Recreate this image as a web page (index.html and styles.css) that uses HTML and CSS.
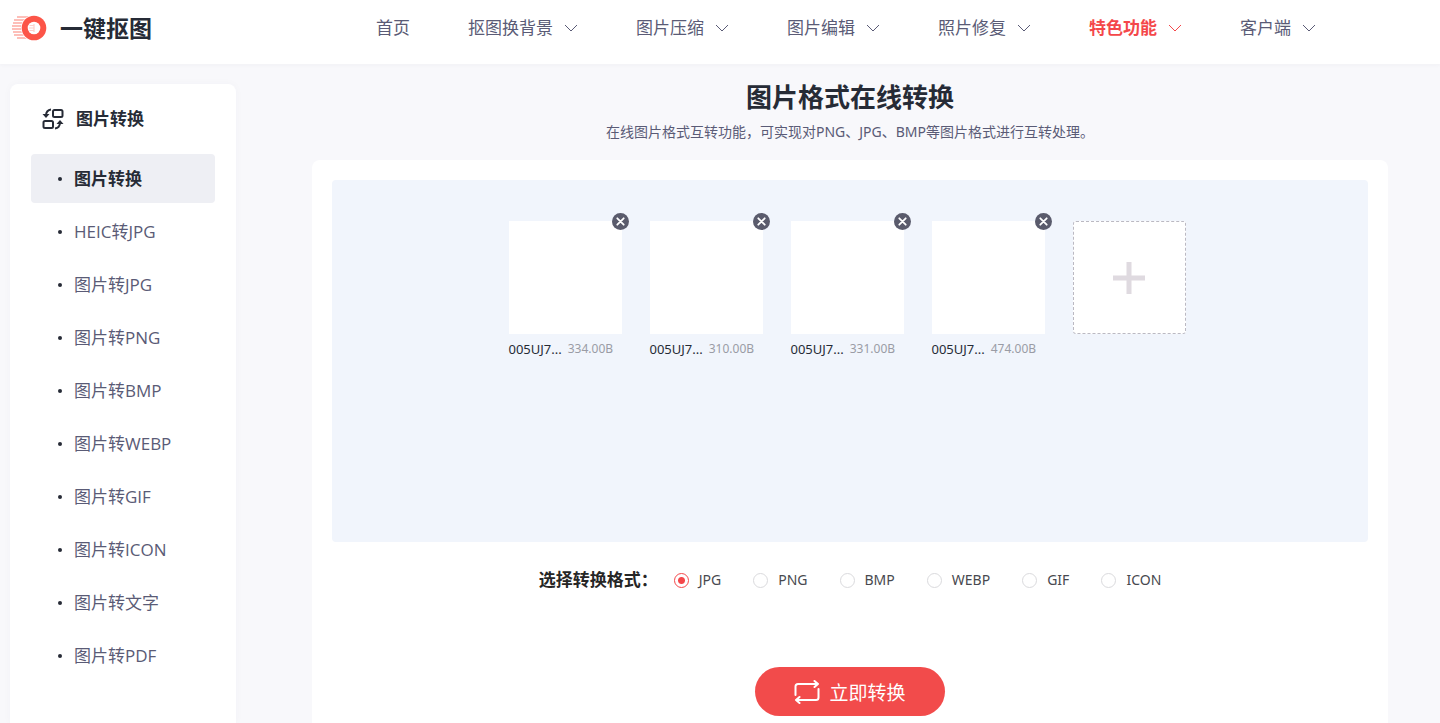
FILE: index.html
```html
<!DOCTYPE html>
<html lang="zh-CN">
<head>
    <meta charset="UTF-8">
    <meta name="viewport" content="width=device-width, initial-scale=1.0">
    <title>图片格式在线转换 - 一键抠图</title>
    <link rel="stylesheet" href="styles.css">
</head>
<body>
    <!-- Shared icon shapes -->
    <svg class="sprite" aria-hidden="true">
        <symbol id="chevron" viewBox="0 0 14 8">
            <path d="M1 1l6 6 6-6" fill="none" stroke="currentColor" stroke-width="1"/>
        </symbol>
        <symbol id="close" viewBox="0 0 17 17">
            <circle cx="8.5" cy="8.5" r="8.5" fill="#5a5b6c"/>
            <path d="M5.3 5.3l6.4 6.4M11.7 5.3l-6.4 6.4" stroke="#fff" stroke-width="1.8" stroke-linecap="round"/>
        </symbol>
    </svg>

    <header class="header">
        <a class="logo" href="#">
            <svg class="logo-icon" width="36" height="26" viewBox="0 0 36 26" aria-hidden="true">
                <path d="M5 2h13M2 5h12M1 8h11M0 11h10M0 14h10M1 17h11M2 20h12M5 23h13" stroke="#fdaaa2" stroke-width="1.6"/>
                <circle cx="22" cy="13" r="13" fill="#fff"/>
                <circle cx="22" cy="13" r="12.3" fill="#fc5548"/>
                <circle cx="22" cy="13" r="6.3" fill="#fff"/>
                <path d="M17.500 10.500h4M17 13h5M17.500 15.500h4M22 9v8" stroke="#fdd0cc" stroke-width="1.200"/>
            </svg>
            <span>一键抠图</span>
        </a>
        <nav class="nav">
            <a href="#">首页</a>
            <a href="#">抠图换背景<svg><use href="#chevron"/></svg></a>
            <a href="#">图片压缩<svg><use href="#chevron"/></svg></a>
            <a href="#">图片编辑<svg><use href="#chevron"/></svg></a>
            <a href="#">照片修复<svg><use href="#chevron"/></svg></a>
            <a class="active" href="#">特色功能<svg><use href="#chevron"/></svg></a>
            <a href="#">客户端<svg><use href="#chevron"/></svg></a>
        </nav>
    </header>

    <div class="layout">
        <aside class="sidebar">
            <h2>
                <svg width="22" height="22" viewBox="0 0 22 22" fill="none" stroke="#262b36" stroke-width="2" aria-hidden="true">
                    <rect x="11" y="2" width="9.500" height="7" rx="1.500"/>
                    <rect x="1.500" y="13" width="9.500" height="7" rx="1.500"/>
                    <path d="M9 1.500C5.800 2 4.200 4 4 7"/>
                    <path d="M.5 6h7L4 10z" fill="#262b36" stroke="none"/>
                    <path d="M13 20.500c3.200-.5 4.800-2.500 5-5.500"/>
                    <path d="M14.500 16h7L18 12z" fill="#262b36" stroke="none"/>
                </svg>
                图片转换
            </h2>
            <ul class="menu">
                <li><a class="active" href="#">图片转换</a></li>
                <li><a href="#">HEIC转JPG</a></li>
                <li><a href="#">图片转JPG</a></li>
                <li><a href="#">图片转PNG</a></li>
                <li><a href="#">图片转BMP</a></li>
                <li><a href="#">图片转WEBP</a></li>
                <li><a href="#">图片转GIF</a></li>
                <li><a href="#">图片转ICON</a></li>
                <li><a href="#">图片转文字</a></li>
                <li><a href="#">图片转PDF</a></li>
            </ul>
        </aside>

        <main class="main">
            <h1>图片格式在线转换</h1>
            <p class="intro">在线图片格式互转功能，可实现对PNG、JPG、BMP等图片格式进行互转处理。</p>

            <form class="panel">
                <!-- Uploaded files -->
                <div class="files">
                    <div class="file">
                        <div class="thumb"></div>
                        <button class="remove" type="button" aria-label="删除"><svg><use href="#close"/></svg></button>
                        <p><span class="name">005UJ7...</span><span class="size">334.00B</span></p>
                    </div>
                    <div class="file">
                        <div class="thumb"></div>
                        <button class="remove" type="button" aria-label="删除"><svg><use href="#close"/></svg></button>
                        <p><span class="name">005UJ7...</span><span class="size">310.00B</span></p>
                    </div>
                    <div class="file">
                        <div class="thumb"></div>
                        <button class="remove" type="button" aria-label="删除"><svg><use href="#close"/></svg></button>
                        <p><span class="name">005UJ7...</span><span class="size">331.00B</span></p>
                    </div>
                    <div class="file">
                        <div class="thumb"></div>
                        <button class="remove" type="button" aria-label="删除"><svg><use href="#close"/></svg></button>
                        <p><span class="name">005UJ7...</span><span class="size">474.00B</span></p>
                    </div>
                    <button class="add" type="button" aria-label="添加图片">
                        <svg width="32" height="32" viewBox="0 0 32 32"><path d="M16 0v32M0 16h32" stroke="#dfdae0" stroke-width="5"/></svg>
                    </button>
                </div>

                <!-- Output format -->
                <div class="formats" role="radiogroup" aria-labelledby="format-title">
                    <strong id="format-title">选择转换格式：</strong>
                    <label><input type="radio" name="format" value="jpg" checked>JPG</label>
                    <label><input type="radio" name="format" value="png">PNG</label>
                    <label><input type="radio" name="format" value="bmp">BMP</label>
                    <label><input type="radio" name="format" value="webp">WEBP</label>
                    <label><input type="radio" name="format" value="gif">GIF</label>
                    <label><input type="radio" name="format" value="icon">ICON</label>
                </div>

                <button class="convert" type="button">
                    <svg width="26" height="24" viewBox="0 0 26 24" fill="none" stroke="#fff" stroke-width="2" stroke-linecap="round" stroke-linejoin="round" aria-hidden="true">
                        <path d="M1.500 15V6.500a2.500 2.500 0 0 1 2.500-2.500h20M20.500 1l3.500 3-3.500 3"/>
                        <path d="M24.500 9v8.500a2.500 2.500 0 0 1-2.500 2.500H2M5.500 17L2 20l3.500 3"/>
                    </svg>
                    立即转换
                </button>
            </form>
        </main>
    </div>
</body>
</html>
```
FILE: styles.css
```css
* {
    box-sizing: border-box;
}
body {
    margin: 0;
    min-height: 100vh;
    display: flex;
    flex-direction: column;
    font-family: "Open Sans", "Noto Sans CJK SC", sans-serif;
    background-color: #f8f8fb;
    color: #262b36;
}
a {
    color: inherit;
    text-decoration: none;
}
button {
    padding: 0;
    border: none;
    font-family: inherit;
    cursor: pointer;
}
.sprite {
    display: none;
}

/* Header */
.header {
    display: flex;
    align-items: center;
    height: 64px;
    padding-bottom: 8px;
    background: white;
    box-shadow: 0 1px 4px rgba(40, 40, 80, 0.04);
}
.logo {
    display: flex;
    align-items: center;
    gap: 12px;
    width: 252px;
    padding-left: 12px;
    font-size: 23px;
    font-weight: bold;
    line-height: 32px;
}
.nav {
    flex: 1;
    display: flex;
    justify-content: center;
    gap: 58px;
    font-size: 17px;
    line-height: 24px;
    color: #5a5b76;
    white-space: nowrap;
}
.nav a {
    display: flex;
    align-items: center;
    gap: 11px;
}
.nav svg {
    width: 14px;
    height: 8px;
}
.nav .active {
    color: #f4474a;
    font-weight: bold;
}

/* Sidebar */
.layout {
    flex: 1;
    display: flex;
}
.sidebar {
    width: 226px;
    margin: 20px 24px 0 10px;
    padding: 23px 21px 0;
    background: white;
    border-radius: 8px 8px 0 0;
    box-shadow: 0 0 8px rgba(40, 40, 80, 0.03);
}
.sidebar h2 {
    display: flex;
    align-items: center;
    gap: 12px;
    margin: 0 0 23px;
    padding-left: 11px;
    font-size: 17px;
    line-height: 24px;
}
.menu {
    display: grid;
    gap: 4px;
    margin: 0;
    padding: 0;
    list-style: none;
}
.menu a {
    display: flex;
    align-items: center;
    gap: 12px;
    height: 49px;
    padding-left: 27px;
    border-radius: 4px;
    font-size: 17px;
    line-height: 24px;
    color: #5a5b76;
}
.menu a::before {
    content: "";
    width: 4px;
    height: 4px;
    border-radius: 50%;
    background: #262b36;
}
.menu .active {
    background: #eeeff4;
    color: #262b36;
    font-weight: bold;
}

/* Converter */
.main {
    flex: 1;
    display: flex;
    flex-direction: column;
    align-items: center;
    padding: 15px 52px 0;
}
.main h1 {
    margin: 0;
    font-size: 26px;
    line-height: 36px;
}
.intro {
    margin: 6px 0 18px;
    font-family: "Noto Sans", "Noto Sans CJK SC", sans-serif;
    font-size: 14px;
    line-height: 21px;
    color: #5a5b76;
}
.panel {
    flex: 1;
    display: flex;
    flex-direction: column;
    align-items: center;
    width: 100%;
    padding: 20px 20px 6px;
    background: white;
    border-radius: 8px 8px 0 0;
}
.files {
    display: flex;
    justify-content: center;
    align-items: flex-start;
    gap: 28px;
    width: 100%;
    min-height: 362px;
    padding: 41px 36px 41px 30px;
    background: #f1f5fc;
    border-radius: 4px;
}
.file {
    position: relative;
    width: 113px;
}
.thumb,
.add {
    width: 113px;
    height: 113px;
    background: white;
}
.remove {
    position: absolute;
    top: -8px;
    right: -7px;
    width: 17px;
    height: 17px;
    background: none;
}
.remove svg {
    display: block;
    width: 17px;
    height: 17px;
}
.file p {
    display: flex;
    gap: 6px;
    margin: 6px 0 0;
    font-family: "Noto Sans", sans-serif;
    font-size: 12px;
    line-height: 18px;
    white-space: nowrap;
}
.name {
    font-size: 13px;
}
.size {
    color: #9a9ca5;
}
.add {
    display: flex;
    justify-content: center;
    align-items: center;
    border: 1px dashed #bbb9c2;
    border-radius: 3px;
}
.formats {
    display: flex;
    align-items: center;
    gap: 32px;
    margin: 26px 0 75px;
    font-family: "Noto Sans", "Noto Sans CJK SC", sans-serif;
    font-size: 14px;
    line-height: 24px;
    color: #48494f;
    white-space: nowrap;
}
.formats strong {
    margin-right: -16px;
    font-size: 17px;
    color: #262626;
}
.formats label {
    display: flex;
    align-items: center;
    gap: 10px;
}
.formats input {
    appearance: none;
    width: 15px;
    height: 15px;
    margin: 0;
    border: 1px solid #dadadd;
    border-radius: 50%;
    background: white;
}
.formats input:checked {
    border-color: #f4474a;
    background: radial-gradient(circle, #f4474a 3px, white 4px);
}
.convert {
    display: flex;
    justify-content: center;
    align-items: center;
    gap: 9px;
    width: 190px;
    height: 49px;
    border-radius: 25px;
    background: #f24b4b;
    color: white;
    font-size: 19px;
}
```
